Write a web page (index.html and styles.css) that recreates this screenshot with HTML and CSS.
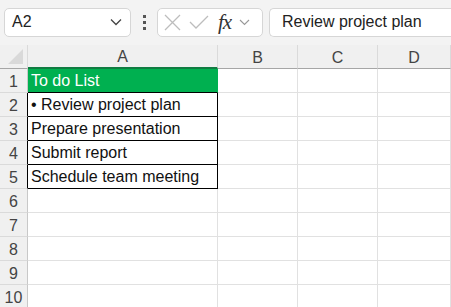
FILE: index.html
```html
<!DOCTYPE html>
<html lang="en">
<head>
  <meta charset="UTF-8" />
  <title>To do List</title>
  <link rel="stylesheet" href="styles.css">
</head>
<body>
  <div class="toolbar">
    <div class="name-box">
      <span>A2</span>
      <svg class="chev" width="12" height="8" viewBox="0 0 12 8"><path d="M1 1.5 L6 6.5 L11 1.5" fill="none" stroke="#444" stroke-width="1.3"/></svg>
    </div>
    <div class="dots"><i></i><i></i><i></i></div>
    <div class="fx-box">
      <svg width="17" height="17" viewBox="0 0 17 17"><path d="M1 1 L16 16 M16 1 L1 16" stroke="#bdbdbd" stroke-width="1.3" fill="none"/></svg>
      <svg width="20" height="15" viewBox="0 0 20 15"><path d="M1 7 L7 13 L19 1" stroke="#bdbdbd" stroke-width="1.3" fill="none"/></svg>
      <span class="fx">fx</span>
      <svg width="11" height="7" viewBox="0 0 11 7"><path d="M1 1 L5.5 5.5 L10 1" fill="none" stroke="#999" stroke-width="1.1"/></svg>
    </div>
    <div class="formula">Review project plan</div>
  </div>

  <div class="sheet">
    <div class="corner"><span class="tri"></span></div>
    <div class="col-head sel">A</div>
    <div class="col-head">B</div>
    <div class="col-head">C</div>
    <div class="col-head">D</div>

    <div class="row-head">1</div>
    <div class="cell title">To do List</div>
    <div class="cell"></div><div class="cell"></div><div class="cell"></div>

    <div class="row-head boxed">2</div>
    <div class="cell item">• Review project plan</div>
    <div class="cell"></div><div class="cell"></div><div class="cell"></div>

    <div class="row-head boxed">3</div>
    <div class="cell item">Prepare presentation</div>
    <div class="cell"></div><div class="cell"></div><div class="cell"></div>

    <div class="row-head boxed">4</div>
    <div class="cell item">Submit report</div>
    <div class="cell"></div><div class="cell"></div><div class="cell"></div>

    <div class="row-head boxed">5</div>
    <div class="cell item">Schedule team meeting</div>
    <div class="cell"></div><div class="cell"></div><div class="cell"></div>

    <div class="row-head">6</div>
    <div class="cell"></div><div class="cell"></div><div class="cell"></div><div class="cell"></div>
    <div class="row-head">7</div>
    <div class="cell"></div><div class="cell"></div><div class="cell"></div><div class="cell"></div>
    <div class="row-head">8</div>
    <div class="cell"></div><div class="cell"></div><div class="cell"></div><div class="cell"></div>
    <div class="row-head">9</div>
    <div class="cell"></div><div class="cell"></div><div class="cell"></div><div class="cell"></div>
    <div class="row-head">10</div>
    <div class="cell"></div><div class="cell"></div><div class="cell"></div><div class="cell"></div>
  </div>
</body>
</html>
```

FILE: styles.css
```css
* {
  box-sizing: border-box;
}

body {
  margin: 0;
  width: 451px;
  height: 307px;
  overflow: hidden;
  background: #fff;
  font-family: 'Liberation Sans', Arial, sans-serif;
}

.toolbar {
  height: 45px;
  background: #f3f3f3;
  display: flex;
  align-items: center;
  padding: 0 0 1px 4px;
}

.name-box {
  width: 127px;
  height: 29px;
  background: #fff;
  border: 1px solid #d6d6d6;
  border-radius: 5px;
  display: flex;
  align-items: center;
  justify-content: space-between;
  padding: 0 8px 0 7px;
  font-size: 16px;
  color: #222;
}

.dots {
  width: 26px;
  display: flex;
  flex-direction: column;
  align-items: center;
  gap: 3px;
}

.dots i {
  width: 3px;
  height: 3px;
  background: #555;
}

.fx-box {
  width: 106px;
  height: 29px;
  background: #fff;
  border: 1px solid #d6d6d6;
  border-radius: 5px;
  display: flex;
  align-items: center;
  gap: 8px;
  padding: 0 4px 0 6px;
}

.fx {
  font-family: 'Liberation Serif', serif;
  font-style: italic;
  font-size: 21px;
  color: #333;
  margin-left: 1px;
  letter-spacing: -1px;
}

.formula {
  flex: 1;
  height: 29px;
  margin-left: 6px;
  background: #fff;
  border: 1px solid #d6d6d6;
  border-right: none;
  border-radius: 5px 0 0 5px;
  display: flex;
  align-items: center;
  padding-left: 12px;
  font-size: 16px;
  color: #222;
}

.sheet {
  display: grid;
  grid-template-columns: 28px 190px 80px 80px 1fr;
  grid-template-rows: 24px repeat(10, 24px);
}

.corner, .col-head, .row-head {
  background: #f0f0f0;
  color: #444;
  font-size: 16px;
}

.corner {
  border-right: 1px solid #dadada;
  border-bottom: 1px solid #a6a6a6;
  position: relative;
}

.tri {
  position: absolute;
  right: 4px;
  bottom: 4px;
  width: 0;
  height: 0;
  border-left: 15px solid transparent;
  border-bottom: 15px solid #d9d9d9;
}

.col-head {
  border-right: 1px solid #dadada;
  border-bottom: 1px solid #a6a6a6;
  display: flex;
  align-items: center;
  justify-content: center;
  padding-top: 2px;
}

.col-head.sel {
  border-bottom: 2px solid #107c41;
}

.row-head {
  border-right: 1px solid #c8c8c8;
  border-bottom: 1px solid #dadada;
  display: flex;
  align-items: center;
  justify-content: center;
  padding-top: 2px;
}

.row-head.boxed {
  border-right-color: #000;
}

.cell {
  border-right: 1px solid #e1e1e1;
  border-bottom: 1px solid #e1e1e1;
  font-size: 16px;
  color: #111;
  padding: 3px 0 0 3px;
  white-space: nowrap;
}

.cell.title {
  background: #00b050;
  color: #fff;
  border-bottom-color: #000;
  border-right-color: #00b050;
}

.cell.item {
  border-right-color: #000;
  border-bottom-color: #000;
}
```
